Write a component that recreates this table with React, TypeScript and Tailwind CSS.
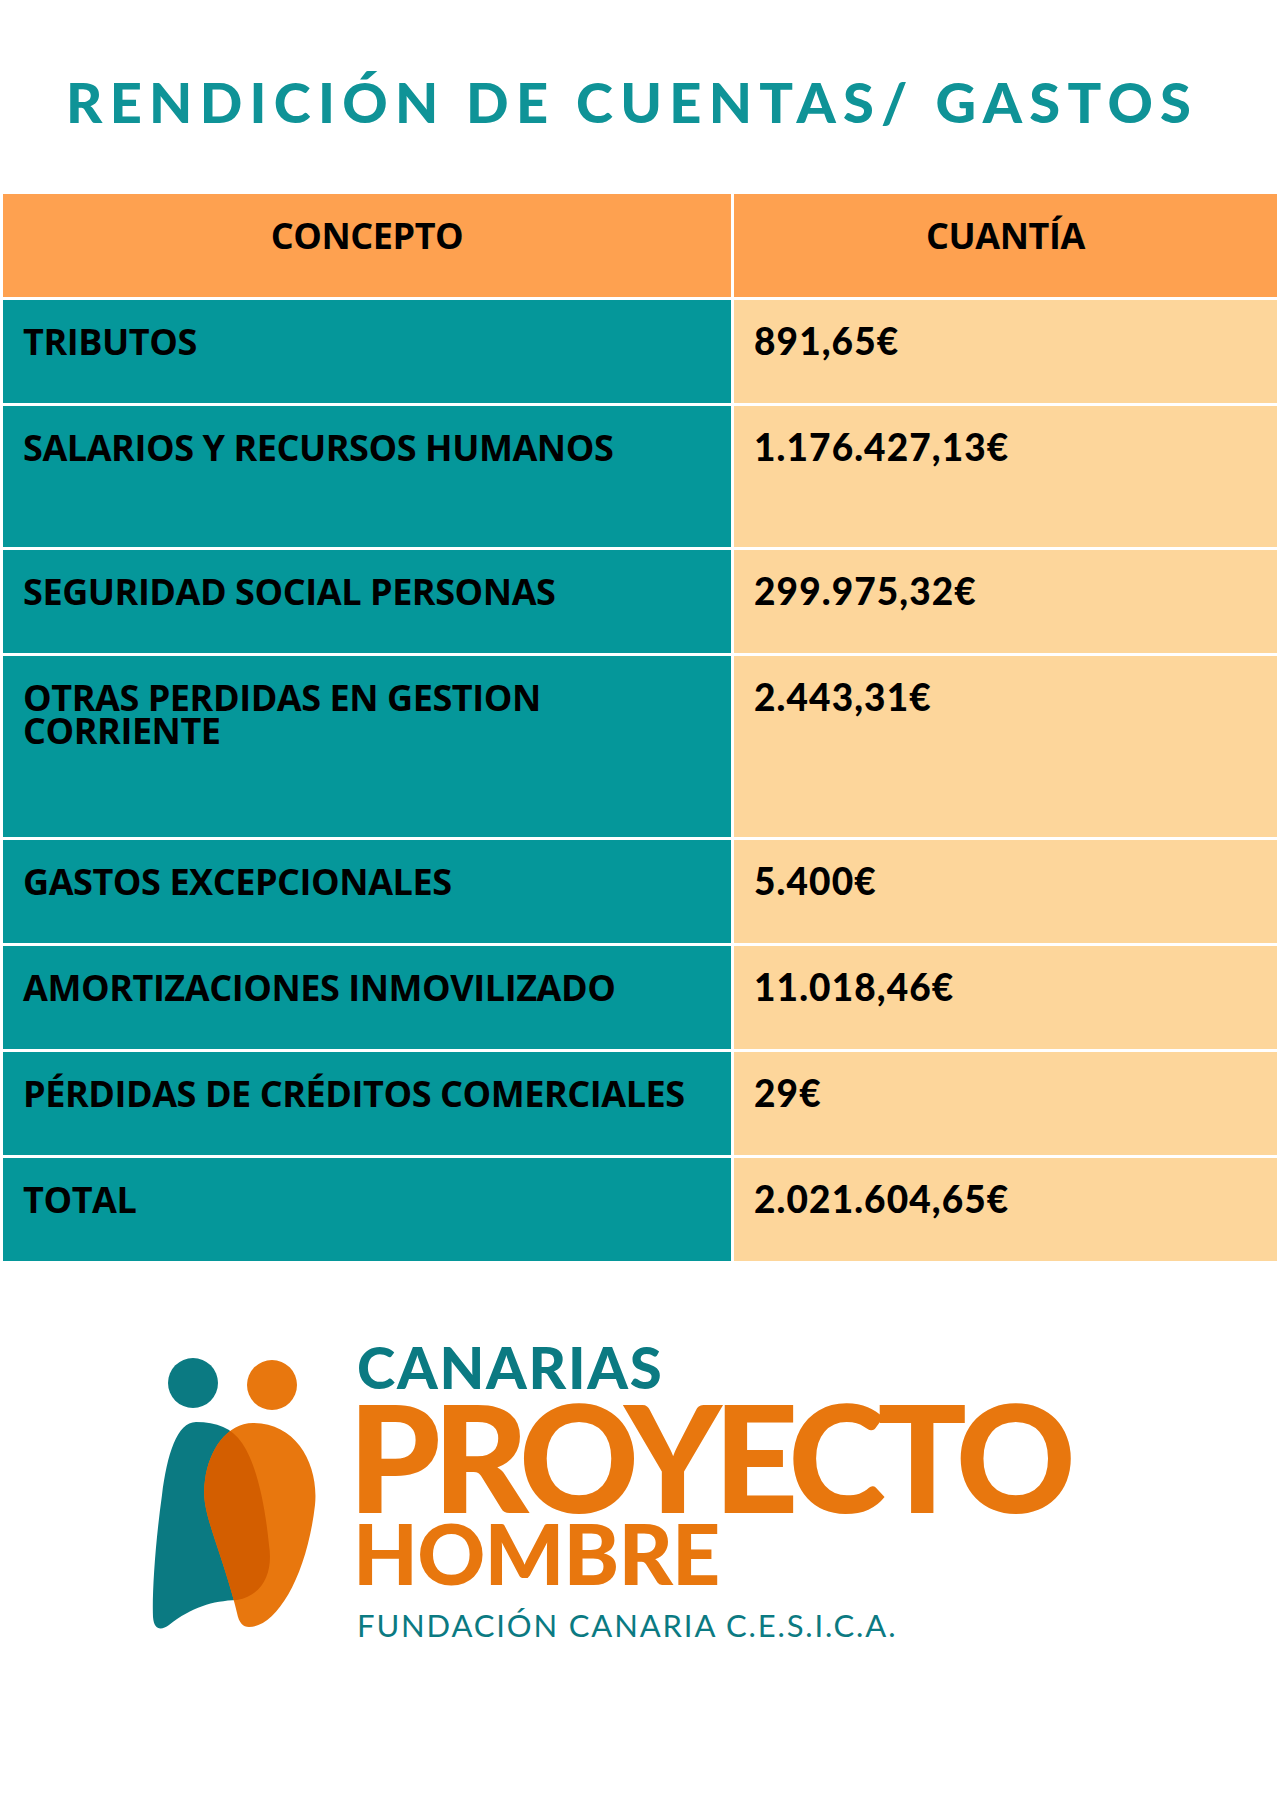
import React from "react";

type Row = {
  concepto: React.ReactNode;
  cuantia: string;
  height: string;
};

const rows: Row[] = [
  { concepto: "TRIBUTOS", cuantia: "891,65€", height: "h-[103px]" },
  { concepto: "SALARIOS Y RECURSOS HUMANOS", cuantia: "1.176.427,13€", height: "h-[141px]" },
  { concepto: "SEGURIDAD SOCIAL PERSONAS", cuantia: "299.975,32€", height: "h-[103px]" },
  {
    concepto: (
      <>
        OTRAS PERDIDAS EN GESTION
        <br />
        CORRIENTE
      </>
    ),
    cuantia: "2.443,31€",
    height: "h-[181px]",
  },
  { concepto: "GASTOS EXCEPCIONALES", cuantia: "5.400€", height: "h-[103px]" },
  { concepto: "AMORTIZACIONES INMOVILIZADO", cuantia: "11.018,46€", height: "h-[103px]" },
  { concepto: "PÉRDIDAS DE CRÉDITOS COMERCIALES", cuantia: "29€", height: "h-[103px]" },
  { concepto: "TOTAL", cuantia: "2.021.604,65€", height: "h-[103px]" },
];

const cellText =
  "font-['Open_Sans',sans-serif] font-bold text-[36px] leading-[33px] tracking-[-0.012em] text-black";
const valueText =
  "font-['Lato',sans-serif] font-black text-[37px] leading-[32px] tracking-[0.03em] text-black";

const tealBody =
  "M49,67 C30,67 20,100 15,140 C8,190 5,240 6,262 C7,275 14,276 22,270 C45,252 65,246 90,245 C118,240 126,215 122,190 C118,150 110,110 95,88 C85,73 70,67 49,67 Z";
const orangeBody =
  "M106,68 C80,68 62,95 58,125 C55,145 60,160 68,185 C78,215 86,240 90,258 C92,268 96,272 102,272 C130,272 160,220 168,150 C172,110 150,68 106,68 Z";

const LogoMark: React.FC = () => (
  <svg width="175" height="275" viewBox="0 0 175 275" className="shrink-0 mt-[17px]">
    <defs>
      <clipPath id="tealBody">
        <path d={tealBody} />
      </clipPath>
    </defs>
    <circle cx="46" cy="28" r="25" fill="#0b7a82" />
    <circle cx="125" cy="30" r="25" fill="#e8770e" />
    <path d={tealBody} fill="#0b7a82" />
    <path d={orangeBody} fill="#e8770e" />
    <path d={orangeBody} fill="#d35e00" clipPath="url(#tealBody)" />
  </svg>
);

export default function App() {
  return (
    <div className="w-full h-[1810px] bg-white overflow-hidden">
      <div className="h-[194px] pt-[74px] pl-[66px]">
        <h1 className="font-['Lato',sans-serif] font-black text-[56px] leading-none tracking-[0.13em] text-[#0f9397] whitespace-nowrap">
          RENDICIÓN DE CUENTAS/ GASTOS
        </h1>
      </div>

      <div className="px-[3px]">
        <div className="grid grid-cols-[728px_1fr] gap-[3px]">
          <div className={`h-[103px] bg-[#fea150] pt-[25px] text-center ${cellText}`}>CONCEPTO</div>
          <div className={`h-[103px] bg-[#fea150] pt-[25px] text-center ${cellText}`}>CUANTÍA</div>
          {rows.map((row, i) => (
            <React.Fragment key={i}>
              <div className={`${row.height} bg-[#05979a] pt-[25px] pl-[20px] ${cellText}`}>{row.concepto}</div>
              <div className={`${row.height} bg-[#fdd69b] pt-[25px] pl-[20px] ${valueText}`}>{row.cuantia}</div>
            </React.Fragment>
          ))}
        </div>
      </div>

      <div className="mt-[77px] pl-[147px] flex flex-row items-start gap-[35px]">
        <LogoMark />
        <div className="flex flex-col font-['Lato',sans-serif] whitespace-nowrap">
          <span className="text-[58px] leading-none font-black text-[#0b7a82] tracking-[0.03em]">CANARIAS</span>
          <span className="text-[148px] leading-[121px] font-black text-[#e8770e] tracking-[-0.055em] ml-[-9px]">
            PROYECTO
          </span>
          <span className="text-[84px] leading-[72px] font-black text-[#e8770e] ml-[-4px] tracking-[-0.01em]">
            HOMBRE
          </span>
          <span className="text-[31px] leading-none font-normal text-[#0b7a82] tracking-[0.06em] mt-[21px]">
            FUNDACIÓN CANARIA C.E.S.I.C.A.
          </span>
        </div>
      </div>
    </div>
  );
}
